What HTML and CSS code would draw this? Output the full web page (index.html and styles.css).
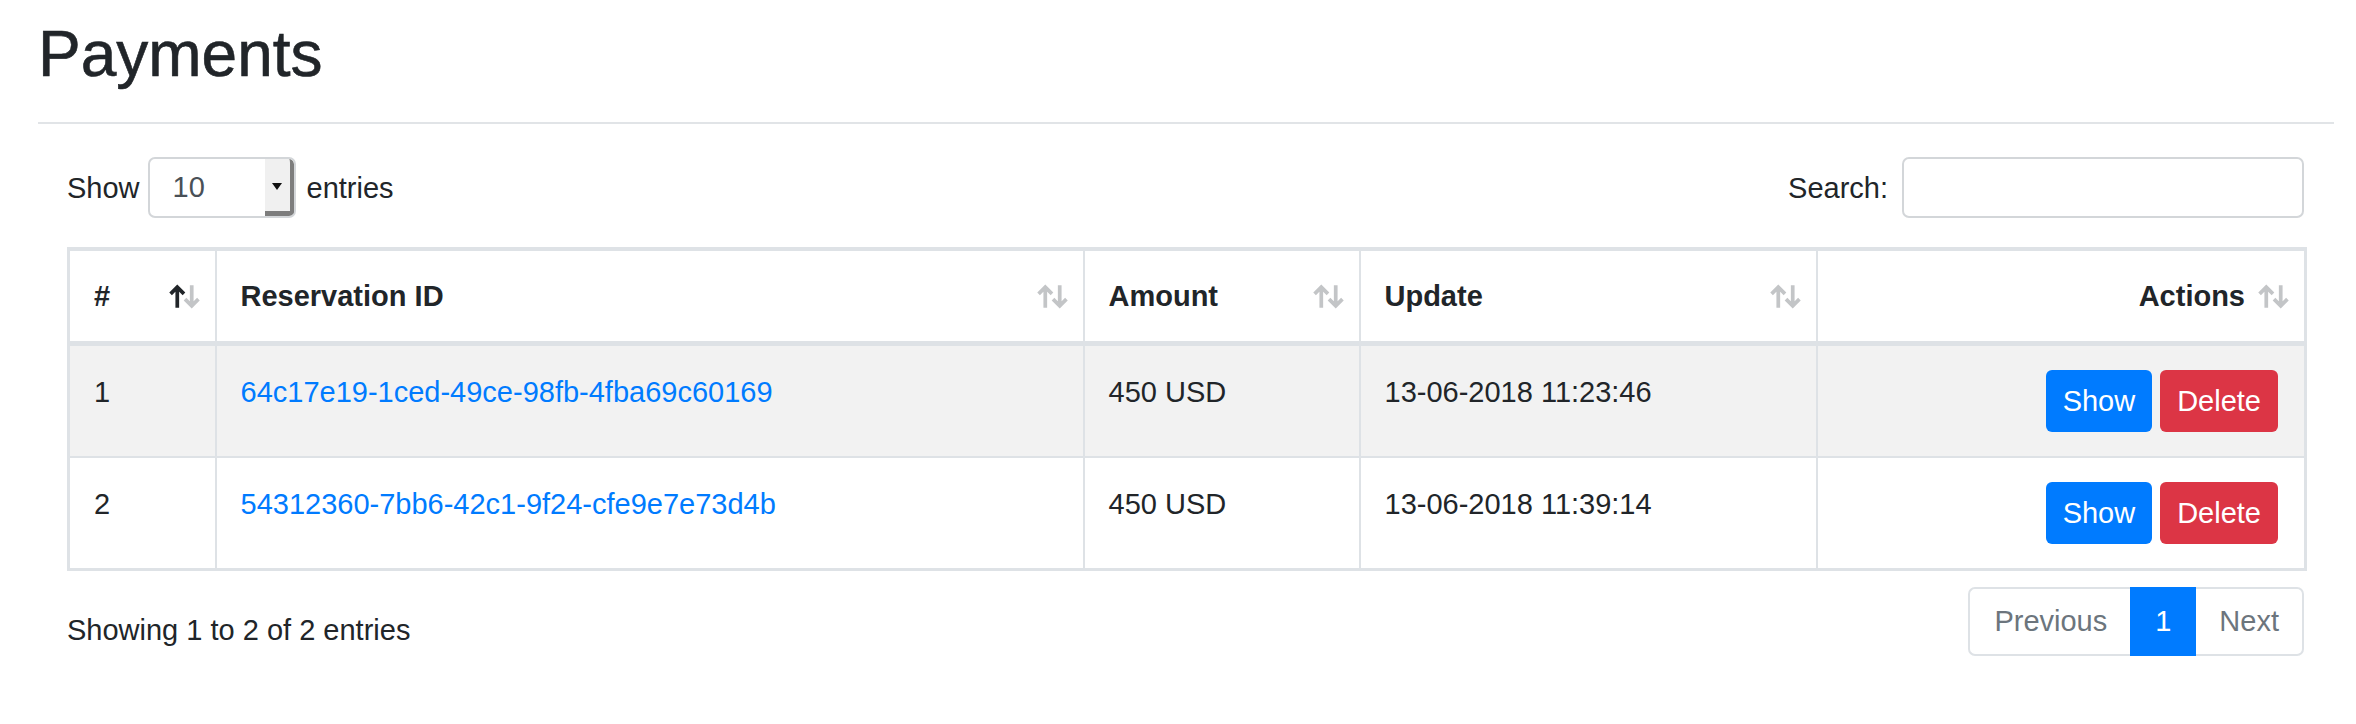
FILE: index.html
```html
<!DOCTYPE html>
<html lang="en">
<head>
<meta charset="utf-8">
<title>Payments</title>
<link rel="stylesheet" href="styles.css">
</head>
<body>
<div class="page">
  <h1 class="title">Payments</h1>
  <hr class="rule">
  <div class="dt-wrapper">
    <div class="dt-controls">
      <div class="length">
        <span>Show</span>
        <div class="select">
          <span class="select-val">10</span>
          <span class="select-btn"><span class="caret"></span></span>
        </div>
        <span>entries</span>
      </div>
      <div class="search">
        <span>Search:</span>
        <div class="search-input"></div>
      </div>
    </div>

    <table class="dt">
      <colgroup>
        <col class="c-num"><col class="c-res"><col class="c-amt"><col class="c-upd"><col class="c-act">
      </colgroup>
      <thead>
        <tr>
          <th><div class="th-inner"><span class="th-label">#</span>
            <svg class="sort" viewBox="0 0 32 24"><path class="up active" d="M9 23V3M2.5 9.5L9 3l6.5 6.5"/><path class="down" d="M23 1v20M16.5 14.5L23 21l6.5-6.5"/></svg></div></th>
          <th><div class="th-inner"><span class="th-label">Reservation ID</span>
            <svg class="sort" viewBox="0 0 32 24"><path class="up" d="M9 23V3M2.5 9.5L9 3l6.5 6.5"/><path class="down" d="M23 1v20M16.5 14.5L23 21l6.5-6.5"/></svg></div></th>
          <th><div class="th-inner"><span class="th-label">Amount</span>
            <svg class="sort" viewBox="0 0 32 24"><path class="up" d="M9 23V3M2.5 9.5L9 3l6.5 6.5"/><path class="down" d="M23 1v20M16.5 14.5L23 21l6.5-6.5"/></svg></div></th>
          <th><div class="th-inner"><span class="th-label">Update</span>
            <svg class="sort" viewBox="0 0 32 24"><path class="up" d="M9 23V3M2.5 9.5L9 3l6.5 6.5"/><path class="down" d="M23 1v20M16.5 14.5L23 21l6.5-6.5"/></svg></div></th>
          <th><div class="th-inner th-right"><span class="th-label">Actions</span>
            <svg class="sort" viewBox="0 0 32 24"><path class="up" d="M9 23V3M2.5 9.5L9 3l6.5 6.5"/><path class="down" d="M23 1v20M16.5 14.5L23 21l6.5-6.5"/></svg></div></th>
        </tr>
      </thead>
      <tbody>
        <tr class="odd">
          <td>1</td>
          <td><a class="link" href="#">64c17e19-1ced-49ce-98fb-4fba69c60169</a></td>
          <td>450 USD</td>
          <td>13-06-2018 11:23:46</td>
          <td class="act-cell"><div class="actions"><a class="btn btn-blue" href="#">Show</a><a class="btn btn-red" href="#">Delete</a></div></td>
        </tr>
        <tr>
          <td>2</td>
          <td><a class="link" href="#">54312360-7bb6-42c1-9f24-cfe9e7e73d4b</a></td>
          <td>450 USD</td>
          <td>13-06-2018 11:39:14</td>
          <td class="act-cell"><div class="actions"><a class="btn btn-blue" href="#">Show</a><a class="btn btn-red" href="#">Delete</a></div></td>
        </tr>
      </tbody>
    </table>

    <div class="dt-footer">
      <div class="info">Showing 1 to 2 of 2 entries</div>
      <ul class="pager">
        <li class="pg pg-first">Previous</li>
        <li class="pg pg-active">1</li>
        <li class="pg pg-last">Next</li>
      </ul>
    </div>
  </div>
</div>
</body>
</html>
```

FILE: styles.css
```css
* { box-sizing: border-box; }

html, body {
  margin: 0;
  background: #fff;
}

body {
  font-family: "Liberation Sans", Arial, Helvetica, sans-serif;
  font-size: 29px;
  line-height: 44px;
  color: #212529;
}

.page {
  padding: 0 22px 0 38px;
}

.title {
  margin: 16px 0 0;
  font-size: 64px;
  line-height: 76px;
  font-weight: 400;
  color: #212529;
  -webkit-text-stroke: 0.6px #212529;
}

.rule {
  margin: 30px 0 0;
  border: 0;
  height: 2px;
  background: #e1e4e7;
}

.dt-wrapper {
  padding: 0 30px 0 29px;
}

.dt-controls {
  margin-top: 33px;
  display: flex;
  justify-content: space-between;
  align-items: center;
  height: 61px;
}

.length {
  display: flex;
  align-items: center;
}

.select {
  margin: 0 11px 0 8px;
  width: 148px;
  height: 61px;
  border: 2px solid #d3d6d9;
  border-radius: 7px;
  display: flex;
  overflow: hidden;
  background: #fff;
}

.select-val {
  flex: 1;
  padding-left: 23px;
  line-height: 57px;
  color: #495057;
}

.select-btn {
  width: 29px;
  background: #f0f0f0;
  border-right: 4px solid #7d7d7d;
  border-bottom: 5px solid #7d7d7d;
  border-top-right-radius: 5px;
  display: flex;
  align-items: center;
  justify-content: center;
}

.caret {
  width: 0;
  height: 0;
  border-left: 5px solid transparent;
  border-right: 5px solid transparent;
  border-top: 7px solid #111;
  margin-top: 2px;
}

.search {
  display: flex;
  align-items: center;
  gap: 14px;
}

.search-input {
  width: 402px;
  height: 61px;
  border: 2px solid #d3d6d9;
  border-radius: 7px;
  background: #fff;
}

.dt {
  margin-top: 29px;
  width: 100%;
  table-layout: fixed;
  border-collapse: collapse;
  border-top: 4px solid #dee2e6;
  border-left: 3px solid #dee2e6;
  border-right: 3px solid #dee2e6;
  border-bottom: 3px solid #dee2e6;
}

.c-num { width: 147px; }
.c-res { width: 868px; }
.c-amt { width: 276px; }
.c-upd { width: 457px; }
.c-act { width: 489px; }

.dt th,
.dt td {
  border: 2px solid #dee2e6;
  text-align: left;
}

.dt th {
  padding: 23px 14px 23px 24px;
  font-weight: 700;
  border-bottom-width: 5px;
  vertical-align: bottom;
}

.th-inner {
  display: flex;
  align-items: center;
}

.th-label {
  flex: 1;
}

.th-right {
  gap: 12px;
}

.th-right .th-label {
  text-align: right;
}

.sort {
  width: 33px;
  height: 25px;
  flex: none;
}

.sort path {
  fill: none;
  stroke: #c3c5c7;
  stroke-width: 3.6;
}

.sort path.active {
  stroke: #212529;
}

.dt td {
  padding: 24px;
  vertical-align: top;
}

.dt tr.odd td {
  background: #f2f2f2;
}

.link {
  color: #007bff;
  text-decoration: none;
}

.act-cell {
  padding-right: 26px !important;
}

.actions {
  display: flex;
  justify-content: flex-end;
  gap: 8px;
}

.btn {
  display: block;
  padding: 9px 17px;
  line-height: 44px;
  color: #fff;
  text-decoration: none;
  border-radius: 6px;
}

.btn-blue { background: #007bff; }
.btn-red { background: #dc3545; }

.dt-footer {
  margin-top: 16px;
  display: flex;
  justify-content: space-between;
  align-items: flex-start;
}

.info {
  padding-top: 21px;
}

.pager {
  margin: 0;
  padding: 0;
  list-style: none;
  display: flex;
}

.pg {
  padding: 11px 23px;
  line-height: 43px;
  color: #6c757d;
  border: 2px solid #dee2e6;
}

.pg-first {
  border-right: 0;
  border-radius: 7px 0 0 7px;
  padding-left: 24px;
}

.pg-last {
  border-left: 0;
  border-radius: 0 7px 7px 0;
}

.pg-active {
  background: #007bff;
  border-color: #007bff;
  color: #fff;
}
```
